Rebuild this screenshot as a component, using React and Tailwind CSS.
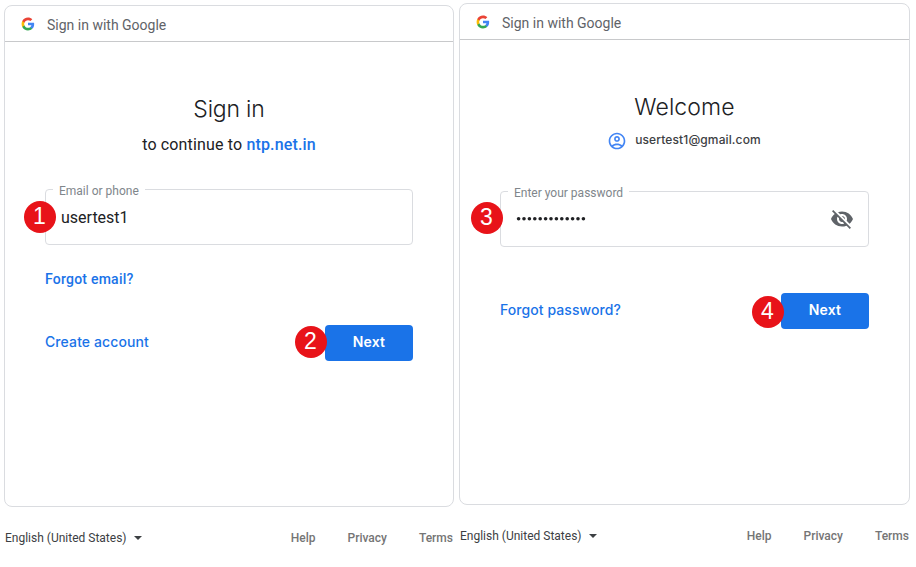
import React from "react";

function GoogleLogo() {
  return (
    <svg viewBox="0 0 48 48" className="mb-0.5 h-[14px] w-[14px]">
      <path fill="#4285F4" d="M45.12 24.5c0-1.56-.14-3.06-.4-4.5H24v8.51h11.84c-.51 2.75-2.06 5.08-4.39 6.64v5.52h7.11c4.16-3.83 6.56-9.47 6.56-16.17z" />
      <path fill="#34A853" d="M24 46c5.94 0 10.92-1.97 14.56-5.33l-7.11-5.52c-1.97 1.32-4.49 2.1-7.45 2.1-5.73 0-10.58-3.87-12.31-9.07H4.34v5.7C7.96 41.07 15.4 46 24 46z" />
      <path fill="#FBBC05" d="M11.69 28.18C11.25 26.86 11 25.45 11 24s.25-2.86.69-4.18v-5.7H4.34C2.85 17.09 2 20.45 2 24s.85 6.91 2.34 9.88l7.35-5.7z" />
      <path fill="#EA4335" d="M24 10.75c3.23 0 6.13 1.11 8.41 3.29l6.31-6.31C34.91 4.18 29.93 2 24 2 15.4 2 7.96 6.93 4.34 14.12l7.35 5.7c1.73-5.2 6.58-9.07 12.31-9.07z" />
    </svg>
  );
}

function Badge({ n, className }) {
  return (
    <span
      className={`absolute flex h-8 w-8 items-center justify-center rounded-full bg-[#e81319] font-['Liberation_Sans',sans-serif] text-[23px] leading-none text-white ${className}`}
    >
      {n}
    </span>
  );
}

function CardHeader() {
  return (
    <div className="flex h-9 shrink-0 items-center border-b border-[#c8c9cb] pt-[3px] pl-4">
      <GoogleLogo />
      <span className="ml-3 text-[14px] leading-5 text-[#5f6368]">Sign in with Google</span>
    </div>
  );
}

function Field({ label, n, badgeClass, className, children }) {
  return (
    <div className={`relative ${className}`}>
      <fieldset className="h-[62px] rounded-[4px] border border-[#dadce0] pl-[7px]">
        <legend className="h-3 px-1.5 text-[12px] leading-[16px] whitespace-nowrap text-[#80868b]">{label}</legend>
        <div className="flex h-[43px] items-center justify-between pr-[14px] pl-2">{children}</div>
      </fieldset>
      <Badge n={n} className={badgeClass} />
    </div>
  );
}

function NextButton({ n, badgeClass }) {
  return (
    <div className="relative">
      <button className="flex h-9 w-[88px] items-center justify-center rounded-[4px] bg-[#1a73e8] pb-[3px] font-['Inter',sans-serif] text-[14px] font-semibold tracking-[0.2px] text-white">
        Next
      </button>
      <Badge n={n} className={badgeClass} />
    </div>
  );
}

function Footer({ className }) {
  return (
    <div className={`flex h-4 items-center text-[12px] leading-4 ${className}`}>
      <span className="text-[#3c4043]">English (United States)</span>
      <span className="ml-[7px] border-x-4 border-t-4 border-x-transparent border-t-[#3c4043]" />
      <div className="ml-auto flex gap-8 font-medium text-[#757575]">
        <span>Help</span>
        <span>Privacy</span>
        <span>Terms</span>
      </div>
    </div>
  );
}

export default function App() {
  return (
    <div className="flex h-[567px] w-[916px] gap-[5px] overflow-hidden bg-white pl-1 font-['Roboto',sans-serif]">
      <section className="w-[450px] shrink-0 pt-[5px]">
        <div className="flex h-[502px] flex-col rounded-lg border border-[#dadce0]">
          <CardHeader />
          <div className="flex flex-col px-10 pt-[51px]">
            <h1 className="h-8 text-center font-['Inter',sans-serif] text-[23px] leading-8 font-[350] tracking-[-0.2px] text-[#202124]">Sign in</h1>
            <p className="mt-2 h-6 text-center text-[16px] leading-6 tracking-[0.15px] text-[#202124]">
              to continue to <span className="font-medium text-[#1a73e8]">ntp.net.in</span>
            </p>
            <Field label="Email or phone" n="1" badgeClass="top-[17.5px] -left-[21.5px]" className="mt-[26px] w-[368px]">
              <span className="pt-0.5 text-[16px] leading-6 text-[#202124]">usertest1</span>
            </Field>
            <a className="mt-6 h-5 text-[14px] leading-5 font-medium tracking-[0.23px] text-[#1a73e8]">Forgot email?</a>
            <div className="mt-9 flex w-[368px] items-center justify-between">
              <a className="pb-[3px] font-['Inter',sans-serif] text-[14px] font-medium tracking-[0.1px] text-[#1a73e8]">Create account</a>
              <NextButton n="2" badgeClass="top-[0.5px] -left-[30.5px]" />
            </div>
          </div>
        </div>
        <Footer className="mt-[23px] pr-px pl-px" />
      </section>

      <section className="w-[451px] shrink-0 pt-[3px]">
        <div className="flex h-[502px] flex-col rounded-lg border border-[#dadce0]">
          <CardHeader />
          <div className="flex flex-col px-10 pt-[51px]">
            <h1 className="h-8 text-center font-['Inter',sans-serif] text-[23px] leading-8 font-[350] tracking-[0.1px] text-[#202124]">Welcome</h1>
            <div className="mt-2 flex h-5 items-center justify-center gap-[8px] pr-px">
              <svg viewBox="0 0 24 24" className="h-5 w-5 fill-[#4285f4]">
                <path d="M12 2C6.48 2 2 6.48 2 12s4.48 10 10 10 10-4.48 10-10S17.52 2 12 2zM7.35 18.5C8.66 17.56 10.26 17 12 17s3.34.56 4.65 1.5C15.34 19.44 13.74 20 12 20s-3.34-.56-4.65-1.5zm10.79-1.38C16.45 15.8 14.32 15 12 15s-4.45.8-6.14 2.12C4.7 15.73 4 13.95 4 12c0-4.42 3.58-8 8-8s8 3.58 8 8c0 1.95-.7 3.73-1.86 5.12zM12 6c-1.93 0-3.5 1.57-3.5 3.5S10.07 13 12 13s3.5-1.57 3.5-3.5S13.93 6 12 6zm0 5c-.83 0-1.5-.67-1.5-1.5S11.17 8 12 8s1.5.67 1.5 1.5S12.83 11 12 11z" />
              </svg>
              <span className="pb-0.5 font-['Inter',sans-serif] text-[12px] font-medium tracking-[0.12px] text-[#3c4043]">usertest1@gmail.com</span>
            </div>
            <Field label="Enter your password" n="3" badgeClass="top-[16.5px] -left-[29.5px]" className="mt-[34px] w-[369px]">
              <svg viewBox="0 0 70 6" className="h-[6px] w-[70px] fill-[#202124]">
                {Array.from({ length: 13 }, (_, i) => (
                  <circle key={i} cx={2.6 + i * 5.4} cy="2.7" r="1.8" />
                ))}
              </svg>
              <svg viewBox="0 0 24 24" className="h-6 w-6 fill-[#5f6368]">
                <path d="M12 7c2.76 0 5 2.24 5 5 0 .65-.13 1.26-.36 1.83l2.92 2.92c1.51-1.26 2.7-2.89 3.43-4.75-1.73-4.39-6-7.5-11-7.5-1.4 0-2.74.25-3.98.7l2.16 2.16C10.74 7.13 11.35 7 12 7zM2 4.27l2.28 2.28.46.46C3.08 8.3 1.78 10.02 1 12c1.73 4.39 6 7.5 11 7.5 1.55 0 3.03-.3 4.38-.84l.42.42L19.73 22 21 20.73 3.27 3 2 4.27zM7.53 9.8l1.55 1.55c-.05.21-.08.43-.08.65 0 1.66 1.34 3 3 3 .22 0 .44-.03.65-.08l1.55 1.55c-.67.33-1.41.53-2.2.53-2.76 0-5-2.24-5-5 0-.79.2-1.53.53-2.2zm4.31-.78l3.15 3.15.02-.16c0-1.66-1.34-3-3-3l-.17.01z" />
              </svg>
            </Field>
            <div className="mt-[46px] flex w-[369px] items-center justify-between">
              <a className="pb-[3px] font-['Inter',sans-serif] text-[14px] font-medium tracking-[0.07px] text-[#1a73e8]">Forgot password?</a>
              <NextButton n="4" badgeClass="top-[2.5px] -left-[29.5px]" />
            </div>
          </div>
        </div>
        <Footer className="mt-[23px] pr-px pl-px" />
      </section>
    </div>
  );
}
